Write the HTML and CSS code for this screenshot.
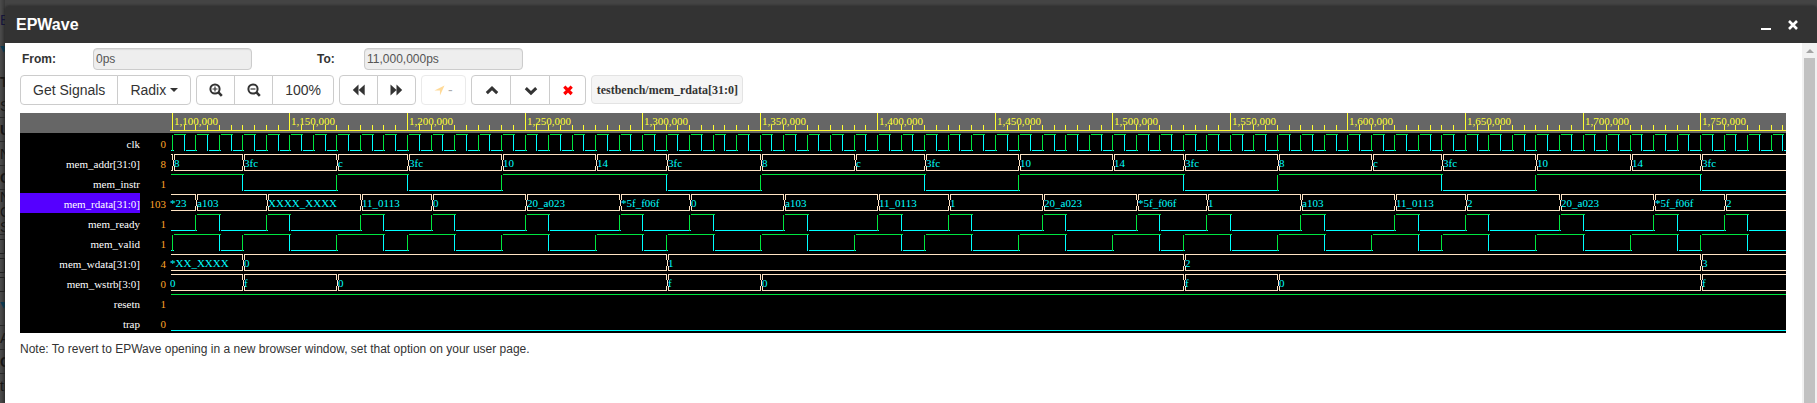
FILE: index.html
```
<!DOCTYPE html>
<html lang="en">
<head>
<meta charset="utf-8">
<title>EPWave</title>
<link rel="stylesheet" href="styles.css">
</head>
<body>
<div class="backdrop">
  <div class="side" aria-hidden="true">
    <span class="side-row brand">B</span>
    <span class="side-row blue">▾</span>
    <span class="side-row strong">T</span>
    <span class="side-row lined">S</span>
    <span class="side-row strong lined">U</span>
    <span class="side-row lined">N</span>
    <span class="side-row strong lined">C</span>
    <span class="side-row tight">N</span>
    <span class="side-row tight">C</span>
    <span class="side-row tight lined">S</span>
    <span class="side-box"></span>
    <span class="side-box"></span>
    <span class="side-box"></span>
    <span class="side-row blue lined">▾</span>
    <span class="side-row lined">A</span>
    <span class="side-row strong lined">C</span>
    <span class="side-row">ti</span>
  </div>
  <main class="window">
    <header class="titlebar">
      <h1 class="title">EPWave</h1>
      <button class="win-btn" type="button" aria-label="Minimize"><svg width="12" height="12"><path d="M1 9h10v2H1z" fill="#fff"/></svg></button>
      <button class="win-btn" type="button" aria-label="Close"><svg width="12" height="12"><path d="M2 2l8 8M10 2l-8 8" stroke="#fff" stroke-width="2.6"/></svg></button>
    </header>
    <div class="body">
      <div class="content">
        <form class="range">
          <label class="range-label" for="from">From:</label>
          <input class="range-input" id="from" value="0ps" readonly>
          <label class="range-label" for="to">To:</label>
          <input class="range-input" id="to" value="11,000,000ps" readonly>
        </form>
        <div class="toolbar">
          <div class="group">
            <button class="btn" type="button">Get Signals</button>
            <button class="btn" type="button">Radix<span class="caret"></span></button>
          </div>
          <div class="group">
            <button class="btn" type="button" aria-label="Zoom in"><svg class="icon" viewBox="0 0 14 14"><circle cx="6" cy="6" r="4.6" fill="none" stroke="#333" stroke-width="2"/><path d="M9.2 9.2l3.6 3.6" stroke="#333" stroke-width="2.6"/><path d="M3.5 6h5M6 3.5v5" stroke="#333" stroke-width="1.2"/></svg></button>
            <button class="btn" type="button" aria-label="Zoom out"><svg class="icon" viewBox="0 0 14 14"><circle cx="6" cy="6" r="4.6" fill="none" stroke="#333" stroke-width="2"/><path d="M9.2 9.2l3.6 3.6" stroke="#333" stroke-width="2.6"/><path d="M3.5 6h5" stroke="#333" stroke-width="1.2"/></svg></button>
            <button class="btn" type="button">100%</button>
          </div>
          <div class="group">
            <button class="btn" type="button" aria-label="Previous edge"><svg class="icon" viewBox="0 0 14 14"><path d="M6.5 1.5v11L.8 7zM12.7 1.5v11L6.7 7z" fill="#333"/></svg></button>
            <button class="btn" type="button" aria-label="Next edge"><svg class="icon" viewBox="0 0 14 14"><path d="M6.5 1.5v11L12.2 7zM.5 1.5v11L6.5 7z" fill="#333"/></svg></button>
          </div>
          <div class="group">
            <button class="btn cursor" type="button" disabled><svg class="cursor-icon" viewBox="0 0 12 12"><path d="M11.5.5L6.5 11.5V6H.5z" fill="#ffa500"/></svg>-</button>
          </div>
          <div class="group">
            <button class="btn move" type="button" aria-label="Move up"><svg class="icon" viewBox="0 0 14 14"><path d="M1.8 10.2L7 5.2l5.2 5" fill="none" stroke="#333" stroke-width="3"/></svg></button>
            <button class="btn move" type="button" aria-label="Move down"><svg class="icon" viewBox="0 0 14 14"><path d="M1.8 5.2L7 10.2l5.2-5" fill="none" stroke="#333" stroke-width="3"/></svg></button>
            <button class="btn remove" type="button" aria-label="Remove signal"><svg class="icon" viewBox="0 0 14 14"><path d="M3.3 3.6l7.4 7.4M10.7 3.6l-7.4 7.4" stroke="#f00" stroke-width="3.2"/></svg></button>
          </div>
          <div class="selected">testbench/mem_rdata[31:0]</div>
        </div>
        <section class="chart" aria-label="Waveforms">
          <div class="row ruler"><span class="name"></span><span class="value"></span><svg class="wave" id="ruler"></svg></div>
          <div class="row"><span class="name">clk</span><span class="value">0</span><svg class="wave" id="clk"></svg></div>
          <div class="row"><span class="name">mem_addr[31:0]</span><span class="value">8</span><svg class="wave" id="addr"></svg></div>
          <div class="row"><span class="name">mem_instr</span><span class="value">1</span><svg class="wave" id="instr"></svg></div>
          <div class="row"><span class="name active">mem_rdata[31:0]</span><span class="value">103</span><svg class="wave" id="rdata"></svg></div>
          <div class="row"><span class="name">mem_ready</span><span class="value">1</span><svg class="wave" id="ready"></svg></div>
          <div class="row"><span class="name">mem_valid</span><span class="value">1</span><svg class="wave" id="valid"></svg></div>
          <div class="row"><span class="name">mem_wdata[31:0]</span><span class="value">4</span><svg class="wave" id="wdata"></svg></div>
          <div class="row"><span class="name">mem_wstrb[3:0]</span><span class="value">0</span><svg class="wave" id="wstrb"></svg></div>
          <div class="row"><span class="name">resetn</span><span class="value">1</span><svg class="wave" id="resetn"></svg></div>
          <div class="row"><span class="name">trap</span><span class="value">0</span><svg class="wave" id="trap"></svg></div>
        </section>
        <p class="note">Note: To revert to EPWave opening in a new browser window, set that option on your user page.</p>
      </div>
      <div class="scrollbar" aria-hidden="true"><span class="arrow"></span><span class="thumb"></span></div>
    </div>
  </main>
</div>
<script src="wave.js"></script>
</body>
</html>
```
FILE: styles.css
```
* { box-sizing: border-box; }

body {
  margin: 0;
  font-family: "Liberation Sans", Arial, sans-serif;
  font-size: 12px;
  color: #333;
}

.backdrop {
  display: flex;
  height: 100vh;
  overflow: hidden;
  background: #444;
}

/* Page behind the dialog */
.side {
  width: 5px;
  flex: none;
  display: flex;
  flex-direction: column;
  padding-top: 8px;
  overflow: hidden;
  background: linear-gradient(to right, #4c4c4c, #383838);
  color: #161616;
  font-size: 14px;
}
.side-row { flex: none; height: 24px; line-height: 24px; }
.side-row.brand { height: 28px; color: #14143c; }
.side-row.blue { height: 34px; color: #0a3a50; }
.side-row.tight { height: 15px; line-height: 15px; }
.side-row.strong { font-weight: bold; }
.side-row.lined { border-bottom: 1px solid #2a2a2a; }
.side-box { flex: none; height: 15px; margin-top: 4px; border: 1px solid #222; border-left: 0; }

.window {
  flex: 1;
  min-width: 0;
  display: flex;
  flex-direction: column;
  margin-top: 6px;
  box-shadow: 0 0 3px #222;
  border-radius: 4px 4px 0 0;
}
.titlebar {
  display: flex;
  align-items: center;
  gap: 7px;
  height: 37px;
  flex: none;
  padding: 0 14px 0 11px;
  background: #333;
  border-radius: 4px 4px 0 0;
}
.title { flex: 1; margin: 0; font-size: 16px; line-height: 20px; color: #fff; }
.win-btn { display: flex; padding: 4px; border: 0; background: none; }

.body { flex: 1; display: flex; min-height: 0; background: #fff; }
.content { flex: 1; min-width: 0; padding: 5px 16px 0 15px; }

.range { display: grid; grid-template-columns: 71px 224px 47px 159px; align-items: center; padding-left: 2px; }
.range-label { font-weight: bold; }
.range-input {
  width: 159px;
  height: 22px;
  padding: 0 2px;
  border: 1px solid #ccc;
  border-radius: 4px;
  background: #eee;
  box-shadow: inset 0 1px 1px #ddd;
  color: #555;
  font: inherit;
}

.toolbar { display: flex; align-items: flex-start; gap: 5px; margin-top: 5px; }
.group { display: flex; }
.btn {
  display: flex;
  align-items: center;
  height: 30px;
  padding: 0 12px;
  border: 1px solid #ccc;
  background: #fff;
  color: #333;
  font: inherit;
  font-size: 14px;
  white-space: nowrap;
}
.btn + .btn { margin-left: -1px; }
.btn:first-child { border-top-left-radius: 4px; border-bottom-left-radius: 4px; }
.btn:last-child { border-top-right-radius: 4px; border-bottom-right-radius: 4px; }
.icon { width: 14px; height: 14px; margin: 0 -1px 0 0; }
.btn.move { padding: 0 12px 0 13px; }
.btn.remove { padding: 0 11px; }
.btn.cursor { gap: 3px; opacity: .4; }
.cursor-icon { width: 11px; height: 11px; }
.caret { margin-left: 4px; border: 4px solid transparent; border-top-color: #333; border-bottom: 0; }
.selected {
  padding: 1px 4px 0 5px;
  border: 1px solid #e3e3e3;
  border-radius: 4px;
  background: #f5f5f5;
  font: bold 12px/26px "Liberation Serif", "Times New Roman", serif;
}

.chart {
  margin-top: 8px;
  background: #000;
  font: 11px/20px "Liberation Serif", "Times New Roman", serif;
}
.row { display: flex; height: 20px; }
.ruler { background: #666; }
.name { width: 120px; flex: none; text-align: right; color: #fff; line-height: 22px; height: 20px; }
.name.active { background: #50f; }
.value { width: 30px; flex: none; padding-right: 4px; text-align: right; color: #ffa52a; line-height: 22px; }
.wave { flex: 1; min-width: 0; height: 20px; overflow: hidden; }
.wave text { fill: #0ff; }
.ruler .wave text { fill: #ff3; }
.tick { fill: #ff3; }
.high { fill: #00e640; }
.low { fill: #0ff; }
.bus { fill: #ffe4c4; }

.note { margin: 8px 0 0; line-height: 16px; }

.scrollbar { width: 15px; flex: none; display: flex; flex-direction: column; align-items: center; background: #f1f1f1; }
.arrow { margin: 6px 0 5px; border: 4px solid transparent; border-bottom-color: #a3a3a3; border-top: 0; }
.thumb { width: 11px; flex: 1; background: #c1c1c1; }
```
FILE: wave.js
```
const NS = 'http://www.w3.org/2000/svg';
const STEPS = 400;
const END = 6000;
const xAt = step => Math.round(1.9 + 11.755 * step);

function add(svg, tag, attrs, text) {
  const el = document.createElementNS(NS, tag);
  for (const key in attrs) el.setAttribute(key, attrs[key]);
  if (text) el.textContent = text;
  svg.appendChild(el);
}
const rect = (svg, kind, x, y, width, height) => add(svg, 'rect', { class: kind, x, y, width, height });
const label = (svg, x, y, text) => add(svg, 'text', { x, y }, text);

function drawRuler() {
  const svg = document.getElementById('ruler');
  rect(svg, 'tick', 0, 17, END, 1);
  for (let i = 0; i < STEPS; i++) {
    const major = i % 10 === 0;
    rect(svg, 'tick', xAt(i), major ? 0 : 12, 1, major ? 17 : 5);
    if (major && i < 140) label(svg, xAt(i) + 2, 12, (1100000 + i * 5000).toLocaleString('en-US'));
  }
}

function drawBit(id, initial, edges) {
  const svg = document.getElementById(id);
  let level = initial;
  let start = 1;
  for (const step of edges) {
    const x = xAt(step);
    rect(svg, level ? 'high' : 'low', start, level ? 1 : 17, x + 2 - start, 1);
    level = 1 - level;
    rect(svg, level ? 'high' : 'low', x, 2, 1, 16);
    start = x + 2;
  }
  rect(svg, level ? 'high' : 'low', start, level ? 1 : 17, END, 1);
}

function drawBus(id, initial, changes) {
  const svg = document.getElementById(id);
  let start = 1;
  if (initial) label(svg, 0, 14, initial);
  for (const [step, text] of changes) {
    const x = xAt(step);
    for (const y of [1, 17]) rect(svg, 'bus', start, y, Math.max(0, x + 1 - start), 1);
    for (const dx of [0, 2]) {
      rect(svg, 'bus', x + dx, 2, 1, 5);
      rect(svg, 'bus', x + dx, 13, 1, 5);
    }
    rect(svg, 'bus', x + 1, 7, 1, 6);
    label(svg, x + 2, 14, text);
    start = x + 2;
  }
  for (const y of [1, 17]) rect(svg, 'bus', start, y, END, 1);
}

drawRuler();
drawBit('clk', 0, Array.from({ length: STEPS }, (_, i) => i));
drawBus('addr', '', [[0, '8'], [6, '3fc'], [14, 'c'], [20, '3fc'], [28, '10'], [36, '14'], [42, '3fc'], [50, '8'],
  [58, 'c'], [64, '3fc'], [72, '10'], [80, '14'], [86, '3fc'], [94, '8'], [102, 'c'], [108, '3fc'], [116, '10'],
  [124, '14'], [130, '3fc']]);
drawBit('instr', 1, [6, 14, 20, 28, 42, 50, 64, 72, 86, 94, 108, 116, 130]);
drawBus('rdata', '*23', [[2, 'a103'], [8, 'XXXX_XXXX'], [16, '11_0113'], [22, '0'], [30, '20_a023'], [38, '*5f_f06f'],
  [44, '0'], [52, 'a103'], [60, '11_0113'], [66, '1'], [74, '20_a023'], [82, '*5f_f06f'], [88, '1'], [96, 'a103'],
  [104, '11_0113'], [110, '2'], [118, '20_a023'], [126, '*5f_f06f'], [132, '2']]);
drawBit('ready', 0, [2, 8, 16, 22, 30, 38, 44, 52, 60, 66, 74, 82, 88, 96, 104, 110, 118, 126, 132].flatMap(s => [s, s + 2]));
drawBit('valid', 0, [0, 6, 14, 20, 28, 36, 42, 50, 58, 64, 72, 80, 86, 94, 102, 108, 116, 124, 130].flatMap(s => [s, s + 4]));
drawBus('wdata', '*XX_XXXX', [[6, '0'], [42, '1'], [86, '2'], [130, '3']]);
drawBus('wstrb', '0', [[6, 'f'], [14, '0'], [42, 'f'], [50, '0'], [86, 'f'], [94, '0'], [130, 'f']]);
drawBit('resetn', 1, []);
drawBit('trap', 0, []);
```
